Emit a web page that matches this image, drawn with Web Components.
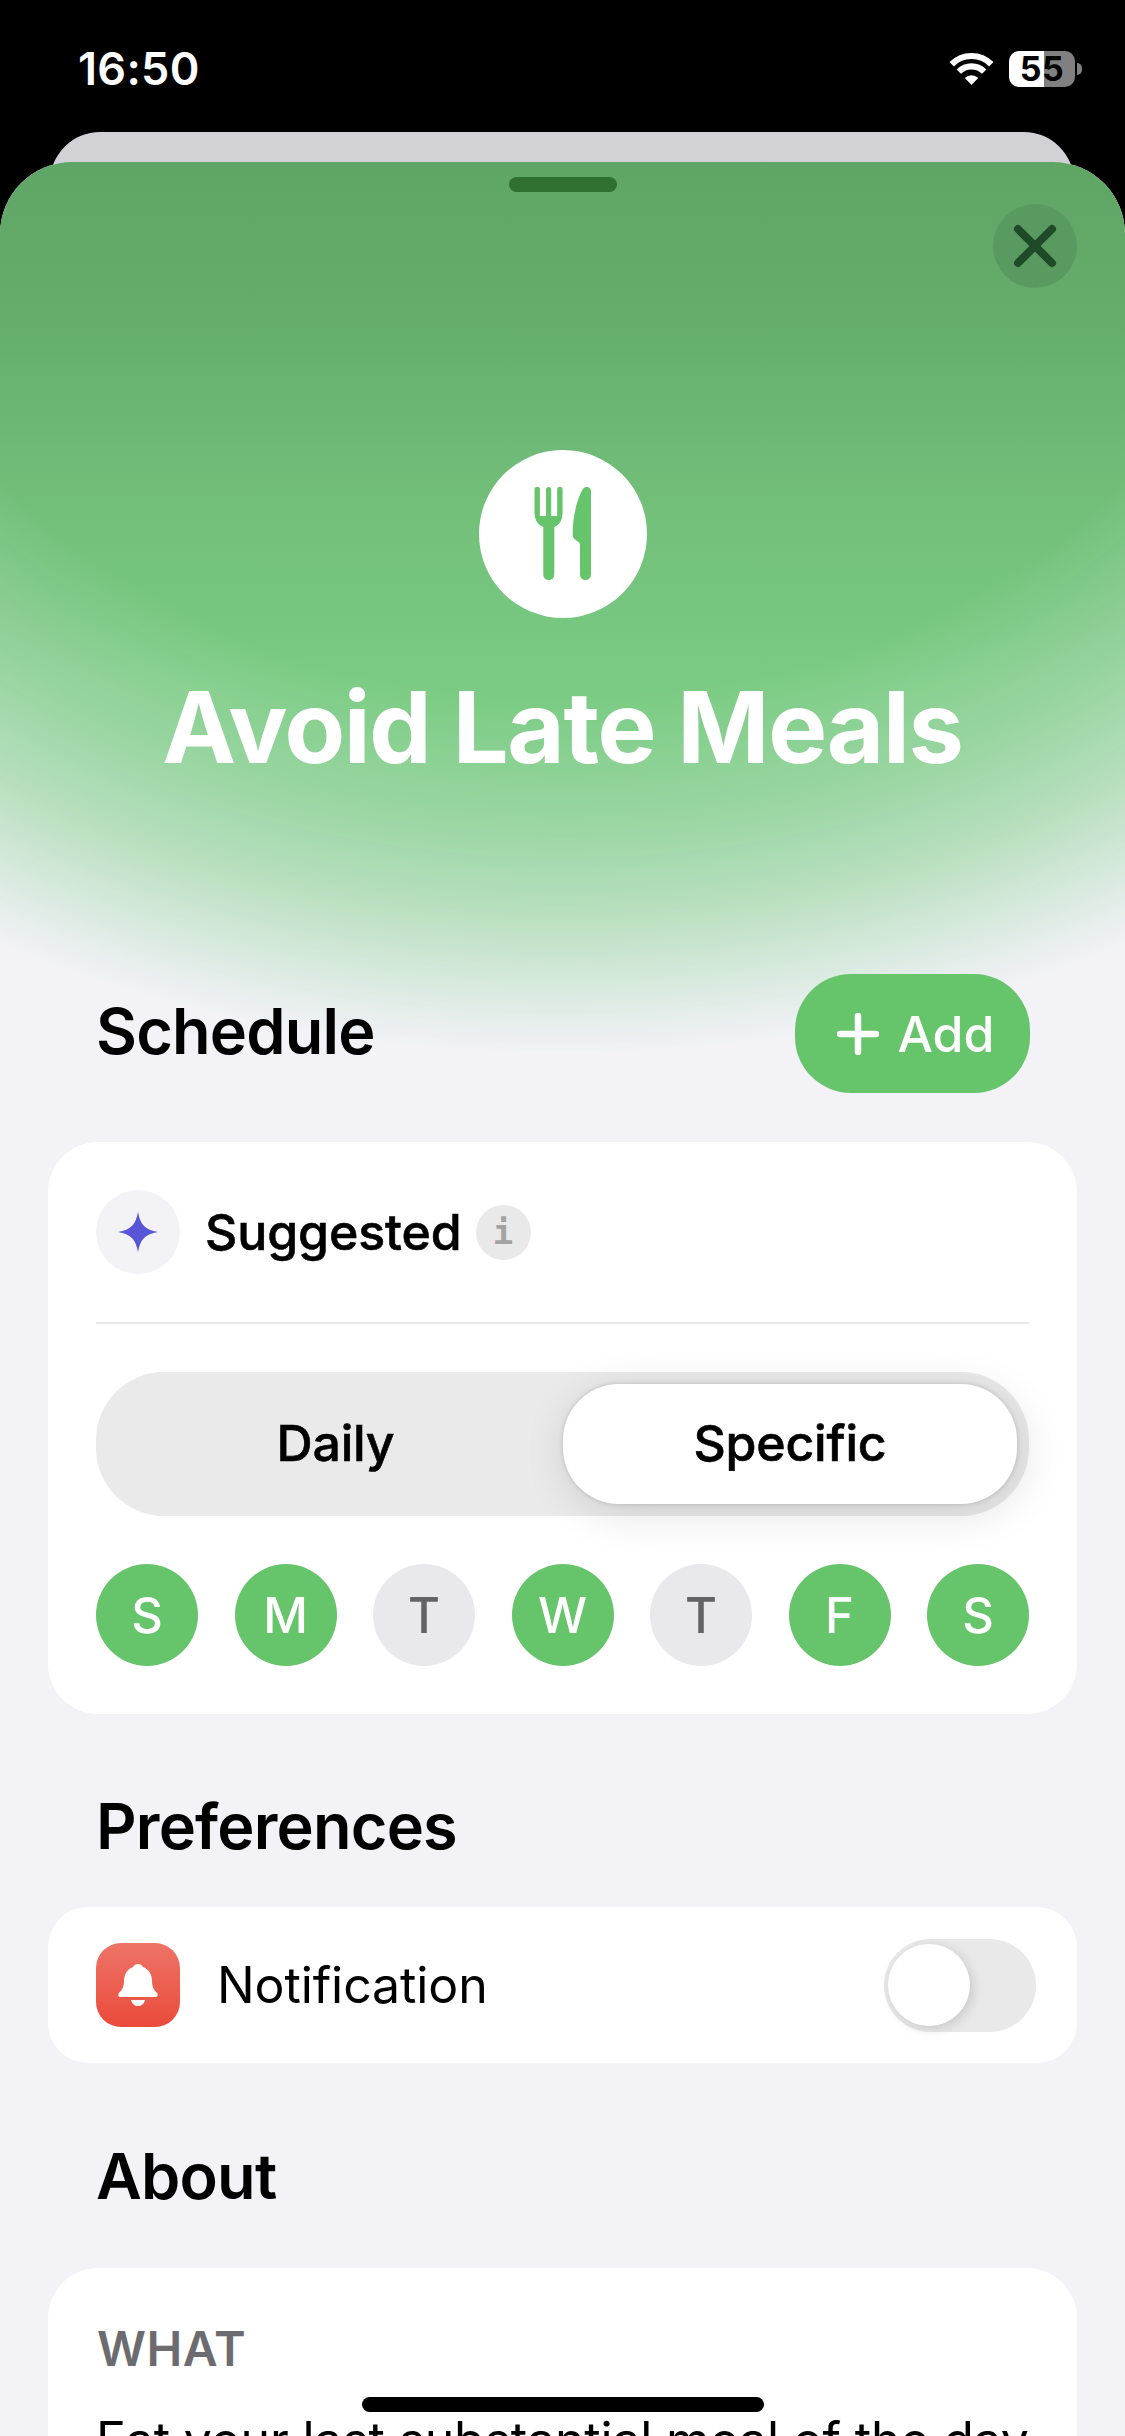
<!DOCTYPE html>
<html lang="en">
<head>
<meta charset="utf-8">
<title>Avoid Late Meals</title>
<style>
  html, body { margin: 0; height: 2436px; overflow: hidden; background: #000; }
  body { font-family: Inter, "Liberation Sans", sans-serif; color: #000; }
</style>
</head>
<body>
<app-screen>
  <status-bar slot="status" time="16:50" battery="55"></status-bar>
  <back-card slot="status"></back-card>
  <sheet-view>
    <sheet-hero title-text="Avoid Late Meals"></sheet-hero>
    <section-head label="Schedule" style="margin-top:197px;--lift:6px"><add-button></add-button></section-head>
    <white-card style="margin-top:49px;padding:48px 48px">
      <suggest-row></suggest-row>
      <segment-control></segment-control>
      <day-picker></day-picker>
    </white-card>
    <section-head label="Preferences" style="margin-top:75px"></section-head>
    <white-card style="margin-top:44px;--r:40px">
      <notify-row></notify-row>
    </white-card>
    <section-head label="About" style="margin-top:76px"></section-head>
    <white-card style="margin-top:55px;padding:51px 48px 48px">
      <about-block heading="WHAT">Eat your last substantial meal of the day</about-block>
    </white-card>
  </sheet-view>
  <home-bar></home-bar>
</app-screen>

<script>
class AppScreen extends HTMLElement {
  constructor() {
    super();
    this.attachShadow({mode: 'open'}).innerHTML = `
      <style>
        :host { display: block; width: 1125px; height: 2436px; position: relative; overflow: hidden; }
      </style>
      <slot name="status"></slot>
      <slot></slot>
    `;
  }
}
customElements.define('app-screen', AppScreen);

class StatusBar extends HTMLElement {
  constructor() {
    super();
    this.attachShadow({mode: 'open'});
  }

  connectedCallback() {
    this.shadowRoot.innerHTML = `
      <style>
        :host { display: flex; height: 132px; box-sizing: border-box; padding: 50px 43px 0 78px; justify-content: space-between; align-items: flex-start; color: #fff; }
        .time { font-size: 45px; line-height: 37px; font-weight: 600; letter-spacing: .3px; }
        .right { display: flex; align-items: center; gap: 15px; margin-top: 1px; }
        svg { display: block; }
        .bat { display: flex; align-items: center; gap: 2px; }
        .level { width: 66px; height: 36px; border-radius: 10px; background: linear-gradient(90deg, #fff 53%, #808080 53%); color: #000; font-size: 34px; font-weight: 700; line-height: 36px; text-align: center; letter-spacing: .5px; }
        .nub { width: 5px; height: 12px; border-radius: 0 5px 5px 0; background: #808080; }
      </style>
      <div class="time">${this.getAttribute('time')}</div>
      <div class="right">
        <svg width="45" height="34" viewBox="0 0 45 34" fill="none" stroke="#fff" stroke-width="6.2">
          <path d="M2.7 12.2A28 28 0 0 1 42.3 12.2"/>
          <path d="M9.8 19.6A18 18 0 0 1 35.2 19.6"/>
          <path d="M22.5 33L15.8 26A9.5 9.5 0 0 1 29.2 26Z" fill="#fff" stroke="none"/>
        </svg>
        <div class="bat"><div class="level">${this.getAttribute('battery')}</div><div class="nub"></div></div>
      </div>
    `;
  }
}
customElements.define('status-bar', StatusBar);

class BackCard extends HTMLElement {
  constructor() {
    super();
    this.attachShadow({mode: 'open'}).innerHTML = `
      <style>
        :host { display: block; height: 60px; margin: 0 51px -30px 50px; background: #d1d1d6; border-radius: 50px 50px 0 0; }
      </style>
    `;
  }
}
customElements.define('back-card', BackCard);

class SheetView extends HTMLElement {
  constructor() {
    super();
    this.attachShadow({mode: 'open'}).innerHTML = `
      <style>
        :host { display: block; position: relative; background: #f2f2f7; border-radius: 72px 72px 0 0; overflow: hidden; height: 2274px; }
        .wash {
          --fade: radial-gradient(ellipse 1170px 890px at 50% 0, #000 60%, rgba(0,0,0,.75) 74%, rgba(0,0,0,.5) 84%, rgba(0,0,0,.28) 91%, rgba(0,0,0,.09) 97%, transparent 100%);
          position: absolute; left: 0; top: 0; width: 100%; height: 900px;
          background: linear-gradient(#5fa565 0, #66ad6c 160px, #72bf7a 340px, #7acb83 520px, #7ccd85 900px);
          -webkit-mask-image: var(--fade);
          mask-image: var(--fade);
        }
        .content { position: relative; }
      </style>
      <div class="wash"></div>
      <div class="content"><slot></slot></div>
    `;
  }
}
customElements.define('sheet-view', SheetView);

class SheetHero extends HTMLElement {
  constructor() {
    super();
    this.attachShadow({mode: 'open'});
  }

  connectedCallback() {
    this.shadowRoot.innerHTML = `
      <style>
        :host { display: flex; flex-direction: column; align-items: center; padding-top: 15px; }
        .grab { width: 108px; height: 15px; border-radius: 8px; background: #2f6f31; }
        .top { align-self: stretch; display: flex; justify-content: flex-end; padding: 12px 48px 0; }
        .close { width: 84px; height: 84px; border-radius: 50%; background: #599a60; }
        svg { display: block; }
        .badge { width: 168px; height: 168px; border-radius: 50%; background: #fff; margin-top: 162px; }
        h1 { margin: 59px 0 0; font-size: 99px; line-height: 100px; font-weight: 700; color: #fff; letter-spacing: -1.3px; white-space: nowrap; }
      </style>
      <div class="grab"></div>
      <div class="top">
        <div class="close">
          <svg width="84" height="84" viewBox="0 0 84 84" fill="none" stroke="#1e4a27" stroke-width="8" stroke-linecap="round">
            <path d="M25 25L59 59M59 25L25 59"/>
          </svg>
        </div>
      </div>
      <div class="badge">
        <svg width="168" height="168" viewBox="0 0 168 168" fill="#66c46b">
          <path d="M55.5 39.5a2.7 2.7 0 0 1 5.4 0V66H67V39.5a2.6 2.6 0 0 1 5.2 0V66h6V39.5a2.7 2.7 0 0 1 5.4 0V62c0 8-3 13-8.300 15V124.500a5.500 5.500 0 0 1-11 0V77C59 75 55.500 70 55.500 62Z"/>
          <path d="M108 37C110.500 37 112 39 112 41V124.500a5.500 5.500 0 0 1-11 0V95C101 93 100 92 98 91L95.500 89C94 88 93.700 86 93.700 84C93.700 62 100 45 104 39C105 37.500 106.500 37 108 37Z"/>
        </svg>
      </div>
      <h1>${this.getAttribute('title-text')}</h1>
    `;
  }
}
customElements.define('sheet-hero', SheetHero);

class SectionHead extends HTMLElement {
  constructor() {
    super();
    this.attachShadow({mode: 'open'});
  }

  connectedCallback() {
    this.shadowRoot.innerHTML = `
      <style>
        :host { display: flex; justify-content: space-between; align-items: center; padding: 0 95px 0 96px; }
        h2 { margin: 0 0 var(--lift, 0); font-size: 63px; line-height: 74px; font-weight: 600; letter-spacing: -.8px; }
      </style>
      <h2>${this.getAttribute('label')}</h2>
      <slot></slot>
    `;
  }
}
customElements.define('section-head', SectionHead);

class AddButton extends HTMLElement {
  constructor() {
    super();
    this.attachShadow({mode: 'open'}).innerHTML = `
      <style>
        :host { display: flex; align-items: center; justify-content: center; gap: 19px; box-sizing: border-box; width: 235px; height: 119px; padding-left: 6px; border-radius: 56px; background: #66c46b; color: #fff; font-size: 50px; font-weight: 500; }
        svg { display: block; }
      </style>
      <svg width="42" height="42" viewBox="0 0 42 42" fill="none" stroke="#fff" stroke-width="6.500" stroke-linecap="round"><path d="M21 3V39M3 21H39"/></svg>
      <span>Add</span>
    `;
  }
}
customElements.define('add-button', AddButton);

class WhiteCard extends HTMLElement {
  constructor() {
    super();
    this.attachShadow({mode: 'open'}).innerHTML = `
      <style>
        :host { display: block; margin-left: 48px; margin-right: 48px; background: #fff; border-radius: var(--r, 50px); }
      </style>
      <slot></slot>
    `;
  }
}
customElements.define('white-card', WhiteCard);

class SuggestRow extends HTMLElement {
  constructor() {
    super();
    this.attachShadow({mode: 'open'}).innerHTML = `
      <style>
        :host { display: flex; align-items: center; height: 84px; padding-bottom: 48px; border-bottom: 2px solid #e9e9ee; font-size: 50px; font-weight: 500; letter-spacing: -.1px; }
        span { -webkit-text-stroke: .6px #000; }
        .spark { width: 84px; height: 84px; border-radius: 50%; background: #f2f2f7; display: flex; align-items: center; justify-content: center; margin-right: 25px; }
        .info { width: 55px; height: 55px; border-radius: 50%; background: #e9e9ea; color: #a3a3a3; margin-left: 14px; font: 700 34px/55px "DejaVu Sans Mono", monospace; text-align: center; letter-spacing: 0; }
        svg { display: block; }
      </style>
      <div class="spark">
        <svg width="42" height="42" viewBox="-21 -21 42 42" fill="#5856d6"><path d="M0-20C2.500-7 7-2.500 20 0C7 2.500 2.500 7 0 20C-2.500 7-7 2.500-20 0C-7-2.500-2.500-7 0-20Z"/></svg>
      </div>
      <span>Suggested</span>
      <div class="info">i</div>
    `;
  }
}
customElements.define('suggest-row', SuggestRow);

class SegmentControl extends HTMLElement {
  constructor() {
    super();
    this.attachShadow({mode: 'open'}).innerHTML = `
      <style>
        :host { display: flex; align-items: center; height: 144px; margin-top: 48px; border-radius: 68px; background: #eaeaea; font-size: 50px; font-weight: 500; letter-spacing: -.2px; -webkit-text-stroke: .6px #000; padding-right: 12px; }
        .off { flex: 1; text-align: center; padding: 0 0 3px 12px; }
        .on { width: 454px; height: 120px; padding-bottom: 3px; box-sizing: border-box; border-radius: 56px; background: #fff; display: flex; align-items: center; justify-content: center; box-shadow: 0 0 5px rgba(0,0,0,.16), 4px 8px 44px rgba(0,0,0,.13); }
      </style>
      <div class="off">Daily</div>
      <div class="on">Specific</div>
    `;
  }
}
customElements.define('segment-control', SegmentControl);

class DayPicker extends HTMLElement {
  constructor() {
    super();
    this.attachShadow({mode: 'open'});
  }

  connectedCallback() {
    const days = [['S', 1], ['M', 1], ['T', 0], ['W', 1], ['T', 0], ['F', 1], ['S', 1]];
    this.shadowRoot.innerHTML = `
      <style>
        :host { display: flex; justify-content: space-between; margin-top: 48px; }
        div { width: 102px; height: 102px; border-radius: 50%; display: flex; align-items: center; justify-content: center; font-size: 49px; font-weight: 500; background: #e9e9eb; color: #636366; }
        .on { background: #66c46b; color: #fff; }
      </style>
      ${days.map(d => `<div class="${d[1] ? 'on' : ''}">${d[0]}</div>`).join('')}
    `;
  }
}
customElements.define('day-picker', DayPicker);

class NotifyRow extends HTMLElement {
  constructor() {
    super();
    this.attachShadow({mode: 'open'}).innerHTML = `
      <style>
        :host { display: flex; align-items: center; height: 156px; padding: 0 41px 0 48px; font-size: 50px; font-weight: 400; letter-spacing: -.1px; }
        .bell { width: 84px; height: 84px; border-radius: 25px; background: linear-gradient(#ee7468, #ea4a3a); margin-right: 37px; }
        svg { display: block; }
        span { flex: 1; }
        .track { width: 152px; height: 93px; border-radius: 47px; background: #e9e9ea; padding: 5.5px 4px; box-sizing: border-box; }
        .knob { width: 82px; height: 82px; border-radius: 50%; background: #fff; box-shadow: 3px 3px 12px rgba(0,0,0,.14); }
      </style>
      <div class="bell">
        <svg width="84" height="84" viewBox="0 0 84 84" fill="#fff">
          <path d="M42 21c-2 0-4 1-5 3C31 26 28 32 28 38c0 6-2 9-5 12c-1 1-1 4 1 4H60c2 0 2-3 1-4c-3-3-5-6-5-12c0-6-3-12-9-14c-1-2-3-3-5-3Z"/>
          <path d="M35 57H49C48 61 45 63 42 63C39 63 36 61 35 57Z"/>
        </svg>
      </div>
      <span>Notification</span>
      <div class="track"><div class="knob"></div></div>
    `;
  }
}
customElements.define('notify-row', NotifyRow);

class AboutBlock extends HTMLElement {
  constructor() {
    super();
    this.attachShadow({mode: 'open'});
  }

  connectedCallback() {
    this.shadowRoot.innerHTML = `
      <style>
        :host { display: block; }
        h3 { margin: 0; padding-left: 1px; font-size: 48px; line-height: 60px; font-weight: 600; letter-spacing: .5px; color: #6c6c70; }
        p { margin: 26px 0 0; font-size: 50px; line-height: 70px; letter-spacing: -.19px; white-space: nowrap; }
      </style>
      <h3>${this.getAttribute('heading')}</h3>
      <p><slot></slot></p>
    `;
  }
}
customElements.define('about-block', AboutBlock);

class HomeBar extends HTMLElement {
  constructor() {
    super();
    this.attachShadow({mode: 'open'}).innerHTML = `
      <style>
        :host { display: block; position: absolute; left: 362px; top: 2397px; width: 402px; height: 15px; border-radius: 8px; background: #000; }
      </style>
    `;
  }
}
customElements.define('home-bar', HomeBar);
</script>
</body>
</html>
